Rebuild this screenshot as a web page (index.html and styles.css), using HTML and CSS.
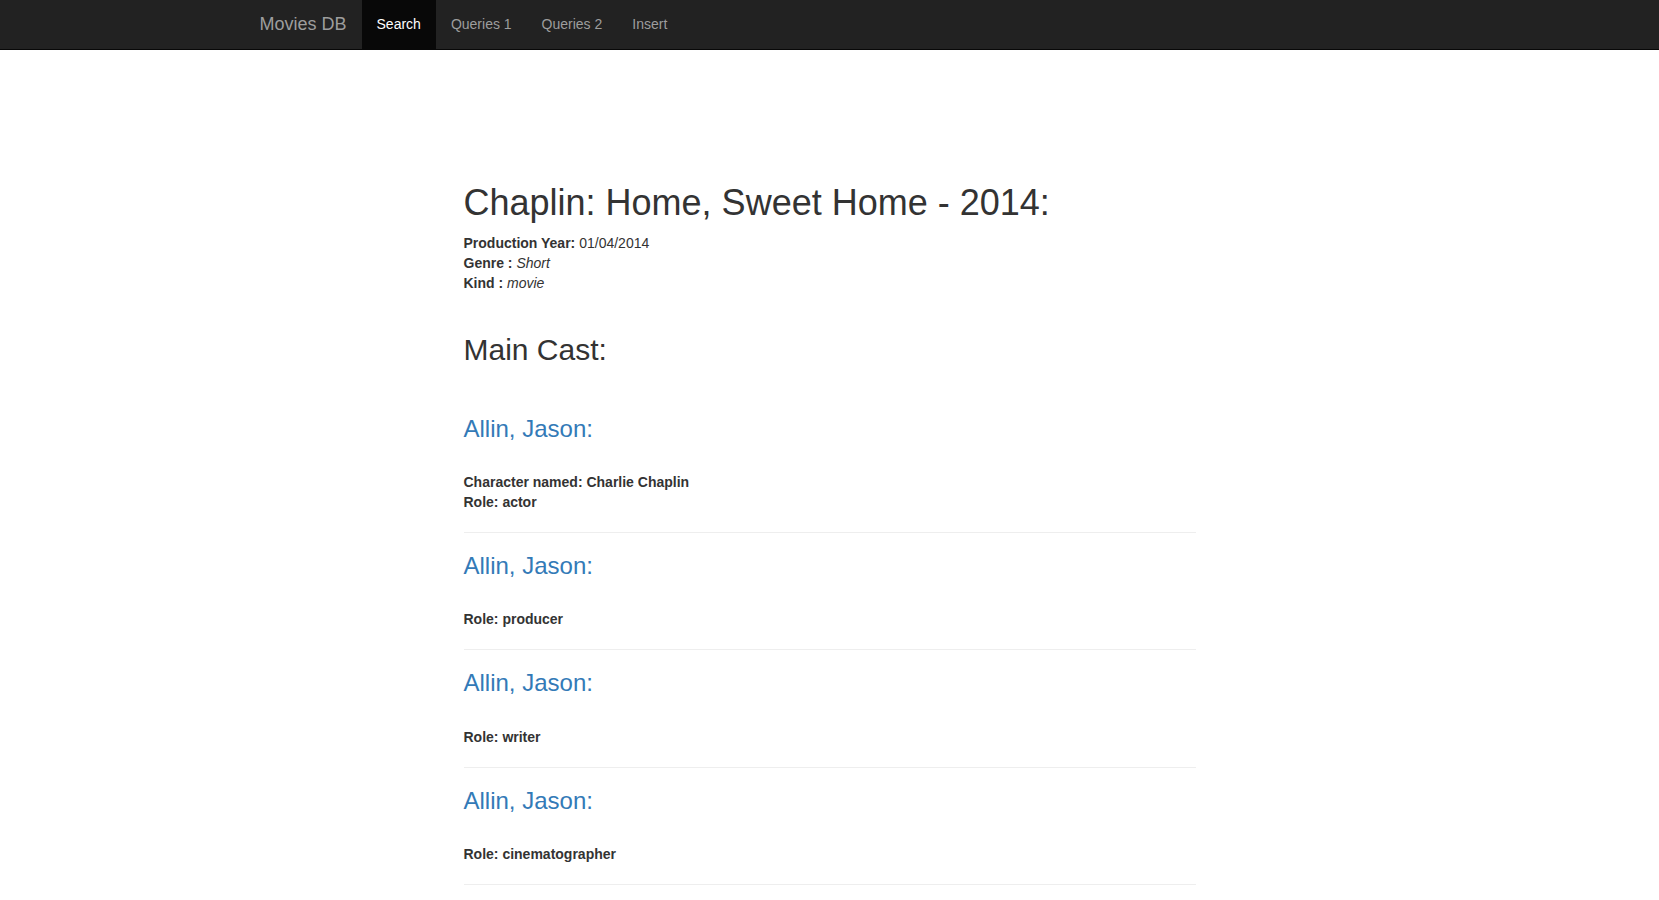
FILE: index.html
```html
<!DOCTYPE html>
<html lang="en">
<head>
<meta charset="utf-8">
<title>Movies DB</title>
<link rel="stylesheet" href="styles.css">
</head>
<body>
<nav class="navbar">
  <div class="container nav-inner">
    <a class="brand" href="#">Movies DB</a>
    <ul class="nav-links">
      <li><a class="active" href="#">Search</a></li>
      <li><a href="#">Queries 1</a></li>
      <li><a href="#">Queries 2</a></li>
      <li><a href="#">Insert</a></li>
    </ul>
  </div>
</nav>
<main class="container">
  <div class="content">
    <h1 class="title">Chaplin: Home, Sweet Home - 2014:</h1>
    <div class="details">
      <div><b>Production Year:</b> 01/04/2014</div>
      <div><b>Genre :</b> <i>Short</i></div>
      <div><b>Kind :</b> <i>movie</i></div>
    </div>
    <h2 class="section">Main Cast:</h2>
    <div class="cast">
      <div class="cast-item">
        <h3 class="person">Allin, Jason:</h3>
        <div class="info">
          <div>Character named: Charlie Chaplin</div>
          <div>Role: actor</div>
        </div>
      </div>
      <div class="cast-item">
        <h3 class="person">Allin, Jason:</h3>
        <div class="info">
          <div>Role: producer</div>
        </div>
      </div>
      <div class="cast-item">
        <h3 class="person">Allin, Jason:</h3>
        <div class="info">
          <div>Role: writer</div>
        </div>
      </div>
      <div class="cast-item">
        <h3 class="person">Allin, Jason:</h3>
        <div class="info">
          <div>Role: cinematographer</div>
        </div>
      </div>
    </div>
  </div>
</main>
</body>
</html>
```

FILE: styles.css
```css
* { box-sizing: border-box; }

html, body {
  margin: 0;
  padding: 0;
}

body {
  font-family: "Liberation Sans", Arial, Helvetica, sans-serif;
  font-size: 14px;
  line-height: 20px;
  color: #333;
  background: #fff;
}

.container {
  width: 1170px;
  margin: 0 auto;
}

.navbar {
  background: #222;
  border-bottom: 1px solid #080808;
  height: 50px;
}

.nav-inner {
  display: flex;
  align-items: stretch;
  height: 49px;
}

.brand {
  display: block;
  padding: 14px 15px 15px;
  font-size: 18px;
  line-height: 20px;
  color: #9d9d9d;
  text-decoration: none;
}

.nav-links {
  display: flex;
  list-style: none;
  margin: 0;
  padding: 0;
}

.nav-links a {
  display: block;
  padding: 14px 15px 15px;
  line-height: 20px;
  height: 49px;
  color: #9d9d9d;
  text-decoration: none;
}

.nav-links a.active {
  color: #fff;
  background: #080808;
}

.content {
  margin-left: 219px;
  width: 732px;
  padding-top: 133px;
}

.title {
  margin: 0 0 10px;
  font-size: 36px;
  line-height: 1.1;
  font-weight: 500;
  color: #333;
}

.details b {
  font-weight: bold;
}

.section {
  margin: 40px 0 30px;
  font-size: 30px;
  line-height: 1.1;
  font-weight: 500;
  color: #333;
}

.cast-item {
  padding: 20px 0;
  border-bottom: 1px solid #eee;
}

.person {
  margin: 0;
  font-size: 24px;
  line-height: 1.1;
  font-weight: 500;
  color: #337ab7;
}

.info {
  margin-top: 30px;
  font-weight: bold;
}
```
